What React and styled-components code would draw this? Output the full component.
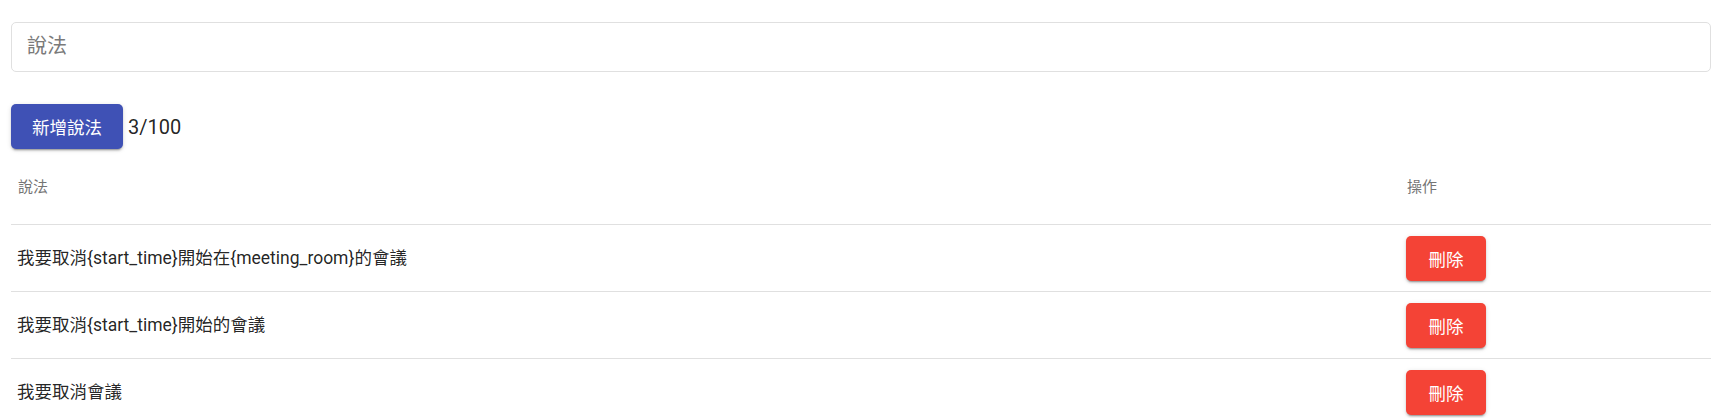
import React from "react";
import styled, { createGlobalStyle } from "styled-components";

const utterances = [
  "我要取消{start_time}開始在{meeting_room}的會議",
  "我要取消{start_time}開始的會議",
  "我要取消會議",
];

export default function App() {
  return (
    <>
      <GlobalStyle />
      <Page>
        <SearchField placeholder="說法" />
        <Toolbar>
          <Button $color="#3f51b5" $width="112px">新增說法</Button>
          <Counter>3/100</Counter>
        </Toolbar>
        <Table>
          <HeadRow>
            <HeadCell>說法</HeadCell>
            <HeadCell>操作</HeadCell>
          </HeadRow>
          {utterances.map((text) => (
            <Row key={text}>
              <TextCell>{text}</TextCell>
              <Cell>
                <Button $color="#f44336" $width="80px">刪除</Button>
              </Cell>
            </Row>
          ))}
        </Table>
      </Page>
    </>
  );
}

const GlobalStyle = createGlobalStyle`
  body {
    margin: 0;
    background: #fff;
    font-family: Roboto, "Noto Sans CJK TC", sans-serif;
    color: rgba(0, 0, 0, 0.87);
  }
`;

const Page = styled.div`
  padding: 22px 11px 0;
`;

const SearchField = styled.input`
  display: block;
  box-sizing: border-box;
  width: 100%;
  height: 50px;
  padding: 0 15px 2px;
  border: 1px solid #e0e0e0;
  border-radius: 5px;
  font-family: Roboto, "Noto Sans CJK TC", sans-serif;
  font-size: 20px;
  outline: none;

  &::placeholder {
    color: #7a7a7a;
  }
`;

const Toolbar = styled.div`
  display: flex;
  align-items: center;
  gap: 5px;
  margin-top: 32px;
`;

const Button = styled.button`
  width: ${(p) => p.$width};
  height: 45px;
  border: none;
  border-radius: 5px;
  background: ${(p) => p.$color};
  color: #fff;
  font-family: Roboto, "Noto Sans CJK TC", sans-serif;
  font-size: 17.5px;
  cursor: pointer;
  box-shadow: 0 3px 1px -2px rgba(0, 0, 0, 0.2), 0 2px 2px 0 rgba(0, 0, 0, 0.14),
    0 1px 5px 0 rgba(0, 0, 0, 0.12);
`;

const Counter = styled.span`
  font-size: 20px;
  color: rgba(0, 0, 0, 0.87);
`;

const Table = styled.div`
  margin-top: 3px;
`;

const HeadRow = styled.div`
  display: grid;
  grid-template-columns: 1fr 311px;
  align-items: center;
  height: 72px;
  border-bottom: 1px solid #e0e0e0;
`;

const HeadCell = styled.div`
  padding: 0 0 6px 7px;
  font-size: 15px;
  color: #757575;
`;

const Row = styled.div`
  display: grid;
  grid-template-columns: 1fr 311px;
  align-items: center;
  height: 66px;
  border-bottom: 1px solid #e0e0e0;
`;

const Cell = styled.div`
  padding-left: 6px;
  font-size: 17.5px;
`;

const TextCell = styled(Cell)`
  padding-bottom: 4px;
`;
